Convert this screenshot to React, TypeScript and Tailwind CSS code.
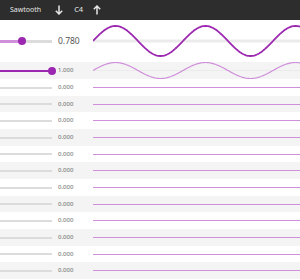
import React from "react";

const FONT = { fontFamily: '"Noto Sans", "Open Sans", sans-serif' };

const sinePoints = (w: number, h: number, amp: number, period: number) => {
  const pts: string[] = [];
  for (let x = 0; x <= w; x += 1) {
    const y = h / 2 - amp * Math.sin((x / period) * Math.PI * 2);
    pts.push(`${x},${y.toFixed(2)}`);
  }
  return pts.join(" ");
};

const Arrow = ({ up }: { up?: boolean }) => (
  <svg width={8} height={10} viewBox="0 0 8 10" className={up ? "rotate-180" : ""}>
    <path d="M4 0.5 V9 M0.8 5.8 L4 9 L7.2 5.8" fill="none" stroke="#e6e6e6" strokeWidth={1.5} />
  </svg>
);

const Slider = ({ value, big }: { value: number; big?: boolean }) => {
  const pos = value * 52;
  return (
    <div className="relative w-[52px] h-full flex items-center">
      <div className={`w-full ${big ? "h-[3px]" : "h-[2px]"} bg-[#dcdcdc]`} />
      {value > 0 && (
        <div
          className={`absolute left-0 ${big ? "h-[3px] bg-[#cf8fda]" : "h-[2px] bg-[#9c27b0]"}`}
          style={{ width: pos }}
        />
      )}
      {value > 0 && (
        <div
          className="absolute w-[8px] h-[8px] rounded-full bg-[#9c27b0]"
          style={{ left: pos - 4 }}
        />
      )}
    </div>
  );
};

const Wave = ({ h, amp, color, width }: { h: number; amp: number; color: string; width: number }) => (
  <svg width={207} height={h} className="block">
    <line x1={0} x2={207} y1={h / 2} y2={h / 2} stroke="#ebebeb" strokeWidth={amp > 10 ? 3 : 1} />
    <polyline points={sinePoints(207, h, amp, 90)} fill="none" stroke={color} strokeWidth={width} />
  </svg>
);

export default function App() {
  const rows = Array.from({ length: 12 });
  return (
    <div className="w-[300px] h-[280px] overflow-hidden bg-white flex flex-col" style={FONT}>
      {/* header */}
      <div className="h-[20px] shrink-0 bg-[#2d2d2d] flex items-center text-[#e6e6e6]">
        <span className="ml-[10px] text-[7px]">Sawtooth</span>
        <span className="ml-[14px] flex"><Arrow /></span>
        <span className="ml-[11px] text-[7.5px]">C4</span>
        <span className="ml-[10px] flex"><Arrow up /></span>
      </div>

      {/* master row */}
      <div className="h-[42px] shrink-0 flex items-center">
        <Slider value={0.42} big />
        <span className="w-[41px] pl-[6px] text-[8.5px] text-[#555]">0.780</span>
        <Wave h={42} amp={15} color="#9c27b0" width={1.8} />
      </div>

      {/* harmonic 1 */}
      <div className="h-[17px] shrink-0 flex items-center bg-[#f4f4f4]">
        <Slider value={1} />
        <span className="w-[41px] pl-[6px] text-[6px] text-[#666]">1.000</span>
        <Wave h={17} amp={8} color="#cf8fda" width={1.2} />
      </div>

      {rows.map((_, i) => (
        <div
          key={i}
          className={`${i % 3 === 1 ? "h-[16px]" : "h-[17px]"} shrink-0 flex items-center ${
            i % 2 === 1 ? "bg-[#f4f4f4]" : "bg-white"
          }`}
        >
          <Slider value={0} />
          <span className="w-[41px] pl-[6px] text-[6px] text-[#666]">0.000</span>
          <div className="flex-1 self-start mt-[8px] h-[1px] bg-[#cf8fda]" />
        </div>
      ))}
    </div>
  );
}
